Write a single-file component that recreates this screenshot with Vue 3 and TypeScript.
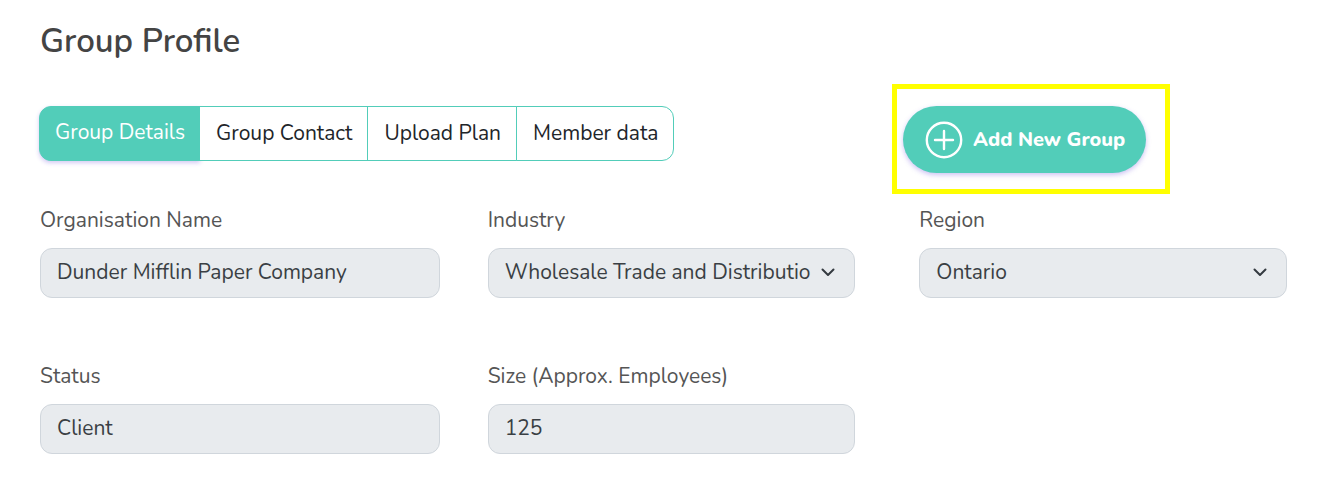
<script setup lang="ts">
import { ref } from 'vue'

interface Field {
  id: string
  label: string
  value: string
  kind: 'text' | 'select'
}

const tabs: string[] = ['Group Details', 'Group Contact', 'Upload Plan', 'Member data']
const activeTab = ref<string>(tabs[0])

const fields: Field[] = [
  { id: 'organisation', label: 'Organisation Name', value: 'Dunder Mifflin Paper Company', kind: 'text' },
  { id: 'industry', label: 'Industry', value: 'Wholesale Trade and Distributio', kind: 'select' },
  { id: 'region', label: 'Region', value: 'Ontario', kind: 'select' },
  { id: 'status', label: 'Status', value: 'Client', kind: 'text' },
  { id: 'size', label: 'Size (Approx. Employees)', value: '125', kind: 'text' },
]
</script>

<template>
  <main class="page">
    <h1 class="title">Group Profile</h1>

    <div class="toolbar">
      <nav class="tabs" aria-label="Group sections">
        <button
          v-for="tab in tabs"
          :key="tab"
          type="button"
          class="tab"
          :class="{ active: tab === activeTab }"
          @click="activeTab = tab"
        >
          {{ tab }}
        </button>
      </nav>
      <div class="highlight">
        <button type="button" class="add">
          <svg class="plus" viewBox="0 0 38 38" aria-hidden="true">
            <circle cx="19" cy="19" r="17.2" />
            <path d="M19 10v18M10 19h18" />
          </svg>
          Add New Group
        </button>
      </div>
    </div>

    <form class="fields" @submit.prevent>
      <div v-for="field in fields" :key="field.id" class="field">
        <label :for="field.id">{{ field.label }}</label>
        <div class="control">
          <input v-if="field.kind === 'text'" :id="field.id" type="text" :value="field.value" disabled />
          <template v-else>
            <select :id="field.id" disabled>
              <option>{{ field.value }}</option>
            </select>
            <svg class="chevron" viewBox="0 0 16 16" aria-hidden="true">
              <path d="M2.500 5.500L8 11l5.500-5.500" />
            </svg>
          </template>
        </div>
      </div>
    </form>
  </main>
</template>

<style>
body {
  margin: 0;
  background: #fff;
}
</style>

<style scoped>
.page {
  box-sizing: border-box;
  padding: 20px 47px 40px 40px;
  font-family: Nunito, "Open Sans", sans-serif;
  font-size: 21px;
  color: #3a3f44;
}

.title {
  margin: 0 0 20px;
  font-size: 33px;
  line-height: 44px;
  font-weight: 600;
  color: #444;
}

.toolbar {
  display: grid;
  grid-template-columns: 852fr 395fr;
  align-items: start;
}

.tabs {
  display: flex;
  width: max-content;
  margin: 22px 0 0 -1px;
}

.tab {
  height: 55px;
  margin: 0 0 0 -1px;
  padding: 0 15px 2px 16px;
  border: 1px solid #52cdb9;
  background: #fff;
  font: inherit;
  color: #212529;
  cursor: pointer;
}

.tab:first-child {
  margin-left: 0;
  border-radius: 12px 0 0 12px;
}

.tab:last-child {
  border-radius: 0 12px 12px 0;
}

.tab.active {
  padding: 0 14px 4px 15px;
  background: #52cdb9;
  color: #fff;
  box-shadow: 0 2px 4px rgba(110, 80, 220, 0.3);
}

.highlight {
  width: max-content;
  padding: 17px 19px 16px 6px;
  border: 5px solid #ff0;
}

.add {
  display: flex;
  align-items: center;
  gap: 10px;
  height: 67px;
  padding: 0 21px 0 22px;
  border: 0;
  border-radius: 34px;
  background: #52cdb9;
  box-shadow: 0 2px 5px rgba(110, 80, 220, 0.35);
  font: inherit;
  font-size: 20px;
  font-weight: 800;
  color: #fff;
  cursor: pointer;
}

.plus {
  width: 38px;
  height: 38px;
  fill: none;
  stroke: #fff;
  stroke-width: 2.4;
  stroke-linecap: round;
}

.fields {
  display: grid;
  grid-template-columns: 448fr 432fr 368fr;
  row-gap: 64px;
  margin-top: 12px;
}

.field:nth-child(3n + 1) {
  padding-right: 48px;
}

.field:nth-child(3n + 2) {
  padding-right: 64px;
}

label {
  display: block;
  margin-bottom: 14px;
  line-height: 28px;
  color: #555;
}

.control {
  position: relative;
}

input,
select {
  box-sizing: border-box;
  display: block;
  width: 100%;
  height: 50px;
  margin: 0;
  padding: 0 16px 2px;
  border: 1px solid #d0d6dc;
  border-radius: 12px;
  background: #e8ebee;
  font: inherit;
  color: #3a3f44;
  opacity: 1;
  appearance: none;
}

select {
  padding-right: 40px;
}

.chevron {
  position: absolute;
  top: 16px;
  right: 19px;
  width: 16px;
  height: 16px;
  fill: none;
  stroke: #343a40;
  stroke-width: 2;
  stroke-linecap: round;
  stroke-linejoin: round;
  pointer-events: none;
}
</style>
